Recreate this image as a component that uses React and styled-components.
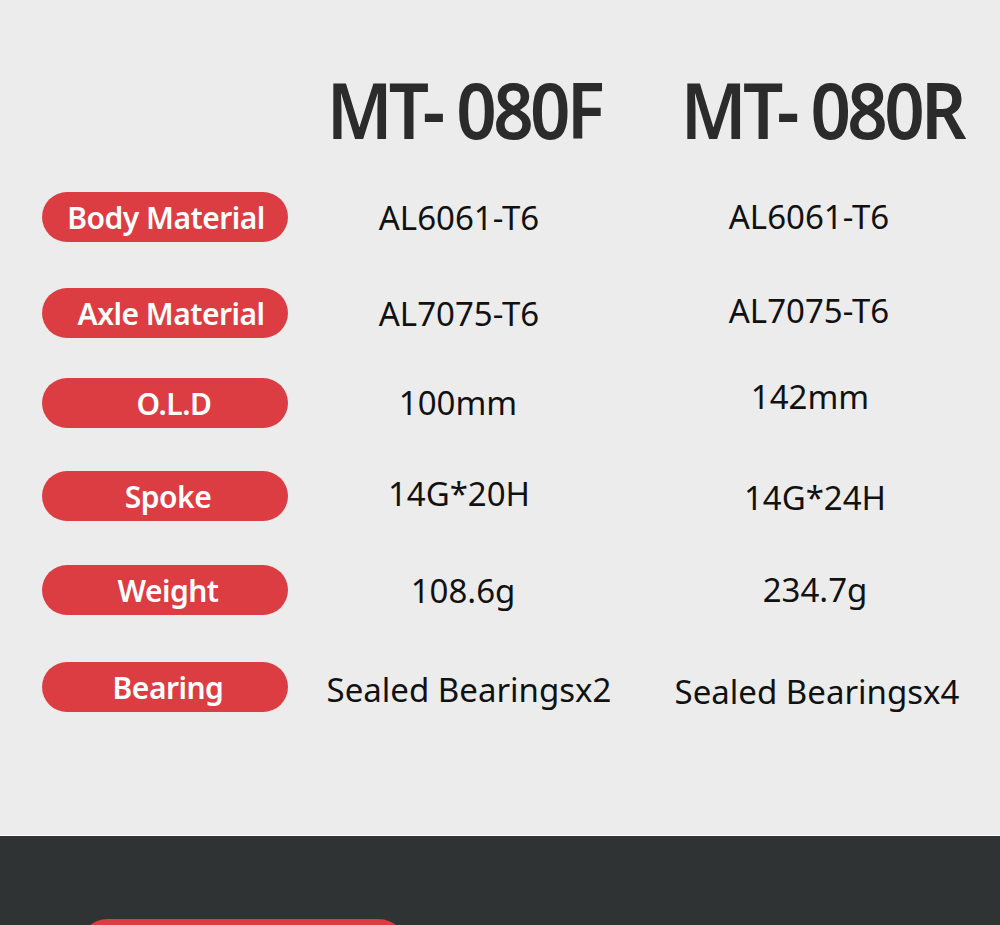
import React from 'react';
import styled, { createGlobalStyle } from 'styled-components';

const GlobalStyle = createGlobalStyle`
  html, body {
    margin: 0;
    padding: 0;
    background: #ececec;
  }
  body {
    font-family: "Noto Sans", "Open Sans", sans-serif;
  }
`;

const Page = styled.div`
  width: 1000px;
  height: 925px;
  overflow: hidden;
  display: flex;
  flex-direction: column;
`;

const SpecSection = styled.section`
  flex: 0 0 835px;
  background: #ececec;
  padding: 66px 0 0 42px;
  box-sizing: border-box;
`;

const Grid = styled.div`
  display: grid;
  grid-template-columns: 246px 352px 360px;
  align-items: center;
`;

const Heading = styled.h2`
  margin: 0;
  font-size: 77px;
  line-height: 88px;
  font-weight: 600;
  letter-spacing: -4px;
  color: #2b2b2b;
  text-align: center;
  transform: scaleX(0.92);
  padding-left: ${(p) => p.$shift || 0}px;
`;

const Row = styled.div`
  display: contents;
`;

const Pill = styled.div`
  height: 50px;
  margin-top: ${(p) => p.$gap}px;
  border-radius: 25px;
  background: #dc3d43;
  color: #fff;
  font-size: 30px;
  font-weight: 600;
  letter-spacing: -0.5px;
  display: flex;
  align-items: center;
  justify-content: center;
  padding-left: ${(p) => p.$indent ?? 6}px;
  box-sizing: border-box;
`;

const Value = styled.div`
  margin-top: ${(p) => p.$gap}px;
  font-size: 33px;
  color: #111;
  text-align: center;
  transform: translate(${(p) => p.$dx || 0}px, ${(p) => p.$dy || 0}px);
`;

const Footer = styled.section`
  flex: 1;
  border-top: 1px solid #ffffff;
  background: #303334;
  padding: 83px 0 0 78px;
`;

const FooterPill = styled.div`
  width: 330px;
  height: 60px;
  border-radius: 30px;
  background: #dc3d43;
`;

const rows = [
  { label: 'Body Material', gap: 38, indent: 2, a: 'AL6061-T6', b: 'AL6061-T6', ad: [-5, 0], bd: [-11, -1] },
  { label: 'Axle Material', gap: 46, indent: 12, a: 'AL7075-T6', b: 'AL7075-T6', ad: [-5, 0], bd: [-11, -3] },
  { label: 'O.L.D', gap: 40, indent: 18, a: '100mm', b: '142mm', ad: [-6, -1], bd: [-10, -7] },
  { label: 'Spoke', gap: 43, a: '14G*20H', b: '14G*24H', ad: [-5, -3], bd: [-5, 1] },
  { label: 'Weight', gap: 44, a: '108.6g', b: '234.7g', ad: [-1, 0], bd: [-5, -1] },
  { label: 'Bearing', gap: 47, a: 'Sealed Bearingsx2', b: 'Sealed Bearingsx4', ad: [5, 2], bd: [-3, 4] },
];

export default function App() {
  return (
    <Page>
      <GlobalStyle />
      <SpecSection>
        <Grid>
          <div />
          <Heading>MT- 080F</Heading>
          <Heading $shift={4}>MT- 080R</Heading>
          {rows.map((r) => (
            <Row key={r.label}>
              <Pill $gap={r.gap} $indent={r.indent}>{r.label}</Pill>
              <Value $gap={r.gap} $dx={r.ad[0]} $dy={r.ad[1]}>{r.a}</Value>
              <Value $gap={r.gap} $dx={r.bd[0]} $dy={r.bd[1]}>{r.b}</Value>
            </Row>
          ))}
        </Grid>
      </SpecSection>
      <Footer>
        <FooterPill />
      </Footer>
    </Page>
  );
}
